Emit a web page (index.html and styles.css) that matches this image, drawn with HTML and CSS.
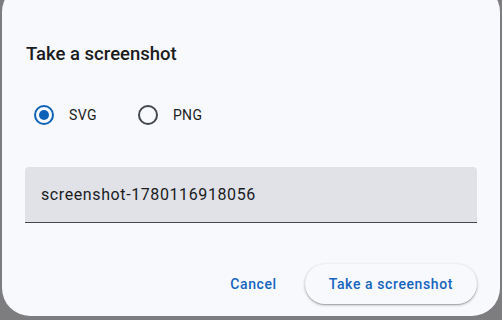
FILE: index.html
```html
<!DOCTYPE html>
<html>
<head>
<meta charset="utf-8">
<link rel="stylesheet" href="styles.css">
</head>
<body>
<div class="scrim">
  <div class="dialog">
    <h2 class="title">Take a screenshot</h2>
    <div class="radios">
      <label class="radio">
        <span class="ring checked"><span class="dot"></span></span>
        <span class="rlabel">SVG</span>
      </label>
      <label class="radio">
        <span class="ring"></span>
        <span class="rlabel">PNG</span>
      </label>
    </div>
    <div class="field">
      <span class="value">screenshot-1780116918056</span>
    </div>
    <div class="actions">
      <button class="btn text">Cancel</button>
      <button class="btn elevated">Take a screenshot</button>
    </div>
  </div>
</div>
</body>
</html>
```

FILE: styles.css
```css
html, body {
  margin: 0;
  padding: 0;
  width: 502px;
  height: 320px;
  overflow: hidden;
  background: #7d7d7f;
  font-family: Roboto, "Noto Sans", sans-serif;
}
.scrim {
  position: relative;
  width: 502px;
  height: 320px;
}
.dialog {
  position: absolute;
  left: 2px;
  top: -16px;
  width: 498px;
  height: 332px;
  box-sizing: border-box;
  background: #f8f9fd;
  border-radius: 28px;
  padding: 16px 23px 0 23px;
  display: flex;
  flex-direction: column;
}
.title {
  margin: 0;
  padding: 42px 0 0 1px;
  font-size: 18.5px;
  font-weight: 500;
  line-height: 24px;
  color: #1a1c1e;
  letter-spacing: 0;
}
.radios {
  display: flex;
  align-items: center;
  margin-top: 29px;
  height: 40px;
  padding-left: 9px;
}
.radio {
  display: flex;
  align-items: center;
  margin-right: 41px;
}
.ring {
  width: 20px;
  height: 20px;
  box-sizing: border-box;
  border: 2px solid #43474e;
  border-radius: 50%;
  display: flex;
  align-items: center;
  justify-content: center;
}
.ring.checked {
  border-color: #0d62b8;
}
.dot {
  width: 10px;
  height: 10px;
  border-radius: 50%;
  background: #0d62b8;
}
.rlabel {
  margin-left: 15px;
  font-size: 14px;
  color: #1a1c1e;
  letter-spacing: 0.4px;
}
.field {
  margin-top: 32px;
  height: 56px;
  box-sizing: border-box;
  background: #e0e2e8;
  border-radius: 4px 4px 0 0;
  border-bottom: 1px solid #43474e;
  display: flex;
  align-items: center;
  padding-left: 16px;
}
.value {
  font-size: 16px;
  color: #1a1c1e;
  letter-spacing: 0.6px;
}
.actions {
  display: flex;
  justify-content: flex-end;
  align-items: center;
  margin-top: 41px;
  gap: 16px;
}
.btn {
  font-family: Roboto, "Noto Sans", sans-serif;
  font-size: 14px;
  font-weight: 500;
  letter-spacing: 0.6px;
  color: #1565c0;
  border: none;
  background: transparent;
  height: 40px;
  border-radius: 20px;
  padding: 0 24px;
  cursor: pointer;
}
.btn.text {
  padding: 0 12px;
}
.btn.elevated {
  background: #f8f9fd;
  box-shadow: 0 1px 3px rgba(0,0,0,0.3), 0 1px 1px rgba(0,0,0,0.15);
}
```
